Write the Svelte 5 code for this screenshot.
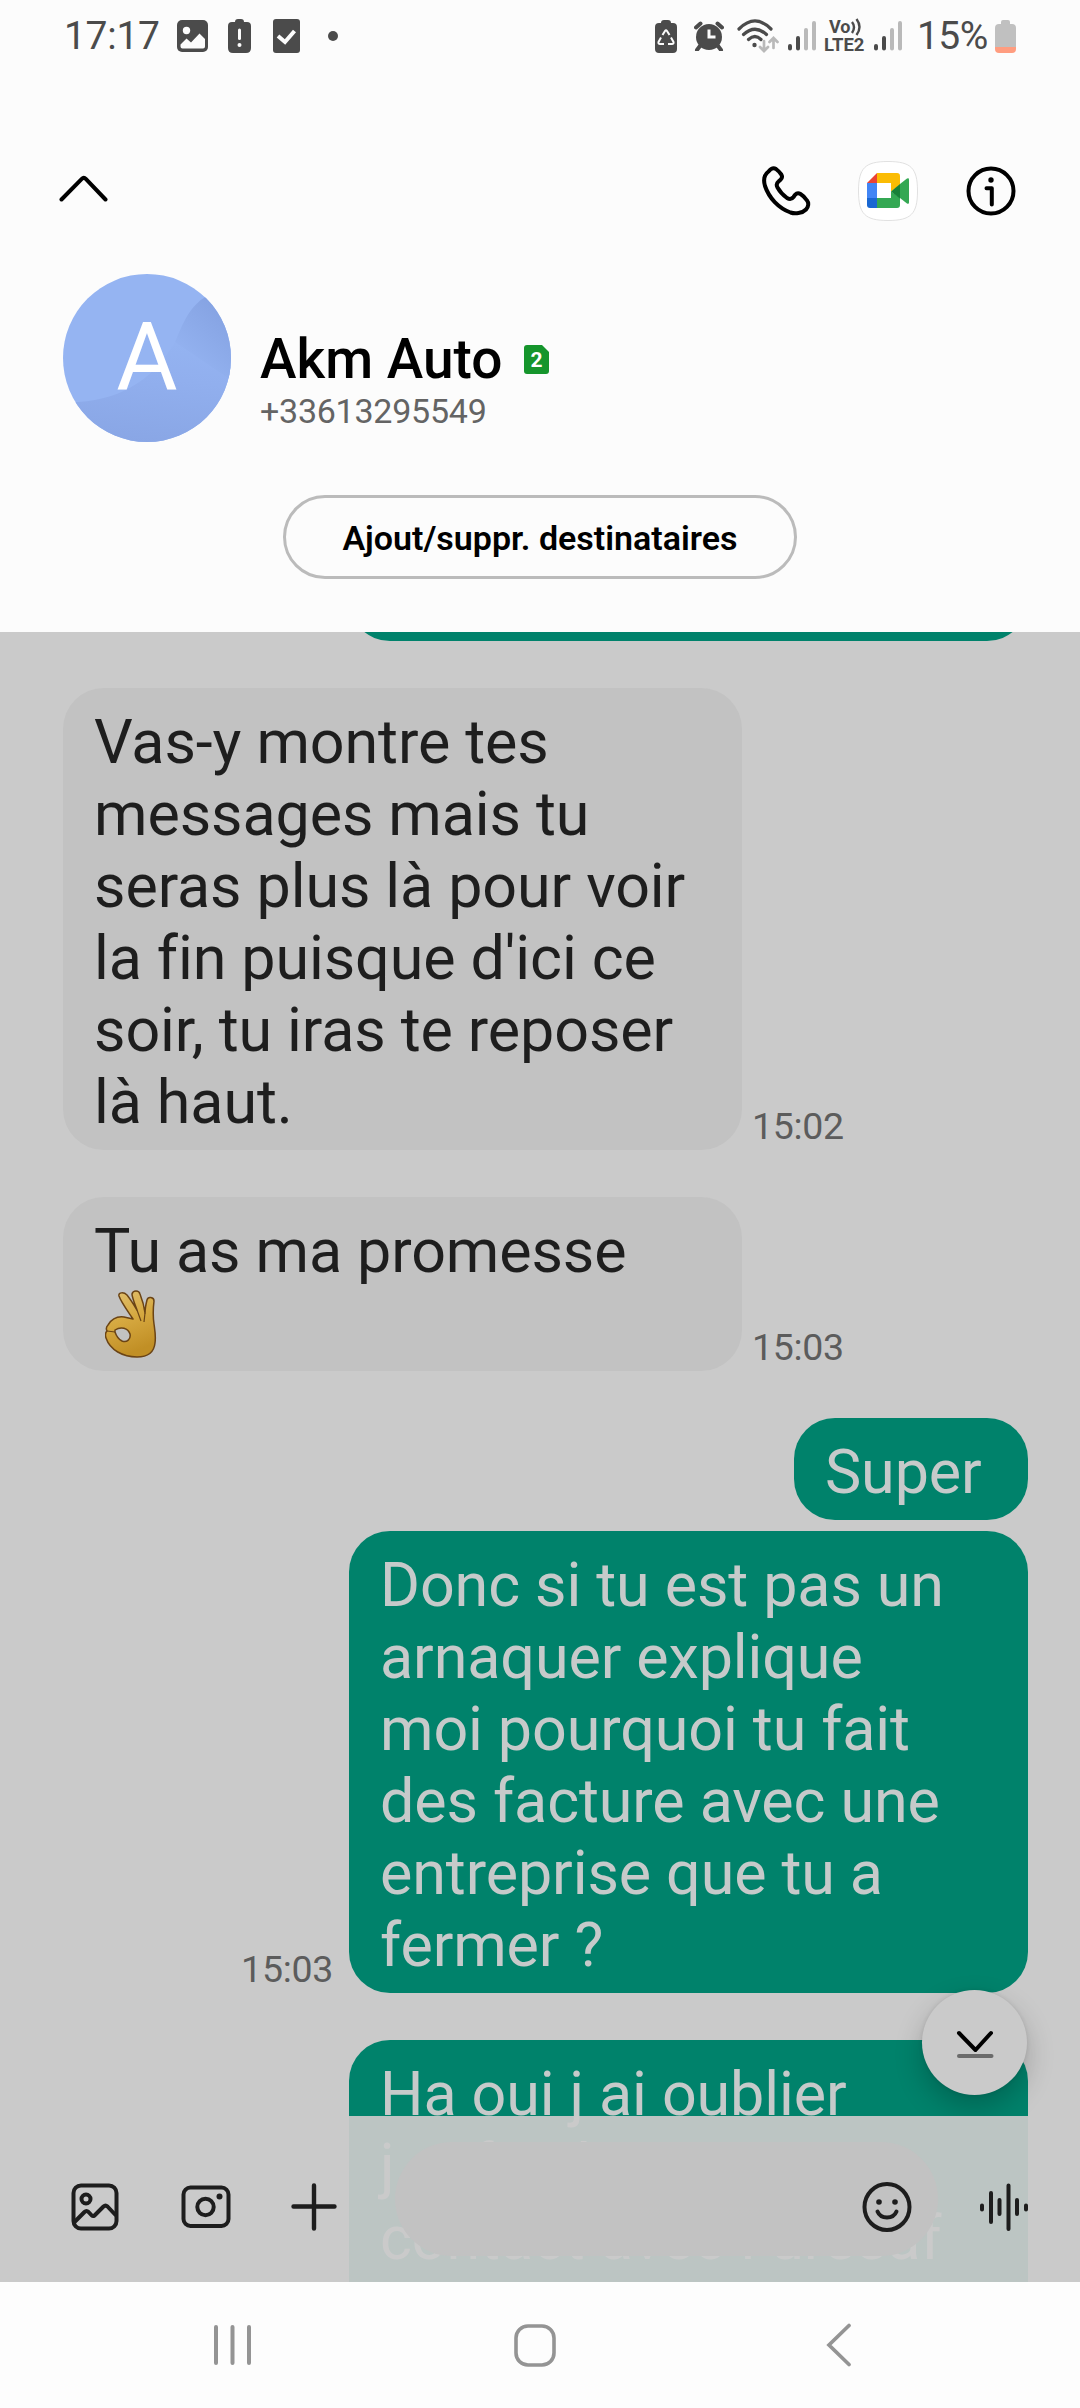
<script>
  const before = [
    {
      side: 'in',
      time: '15:02',
      lines: ['Vas-y montre tes', 'messages mais tu', 'seras plus là pour voir', "la fin puisque d'ici ce", 'soir, tu iras te reposer', 'là haut.']
    },
    { side: 'in', time: '15:03', lines: ['Tu as ma promesse'], emoji: true },
    { side: 'out', small: true, lines: ['Super'] },
    {
      side: 'out',
      time: '15:03',
      tight: true,
      lines: ['Donc si tu est pas un', 'arnaquer explique', 'moi pourquoi tu fait', 'des facture avec une', 'entreprise que tu a', 'fermer ?']
    },
    { side: 'out', last: true, lines: ['Ha oui j ai oublier', 'j ai fait le', 'contact avec l urssaf'] }
  ];
</script>

{#snippet signal()}
  <svg class="signal" width="28" height="30" viewBox="0 0 28 30" fill="none" stroke-width="4" stroke-linecap="round">
    <path d="M2 25v2.5M10 17v10.500" stroke="#4b4b4b" />
    <path d="M18 9v18.500M26 2v25.500" stroke="#b9b9b9" />
  </svg>
{/snippet}

<div class="phone">
  <header>
    <div class="status">
      <span class="clock">17:17</span>
      <svg class="s-image" width="31" height="32" viewBox="0 0 31 32">
        <rect width="31" height="32" rx="5" fill="#4b4b4b" />
        <circle cx="9.500" cy="10.500" r="3.700" fill="#fcfcfc" />
        <path d="M3.500 24.500 9.500 18.500 14 22.500 22.500 13.500 28 19v7.500q0 2-2 2H5.500q-2 0-2-2Z" fill="#fcfcfc" />
      </svg>
      <svg class="s-alert" width="23" height="34" viewBox="0 0 23 34">
        <path d="M7 3q0-3 3-3h3q3 0 3 3h3q4 0 4 4v22q0 5-5 5H5q-5 0-5-5V7q0-4 4-4Z" fill="#4b4b4b" />
        <path d="M11.500 11v8.500" stroke="#fcfcfc" stroke-width="3" stroke-linecap="round" />
        <circle cx="11.500" cy="26" r="2" fill="#fcfcfc" />
      </svg>
      <svg class="s-check" width="27" height="34" viewBox="0 0 27 34">
        <rect width="27" height="34" rx="3" fill="#4b4b4b" />
        <path d="M5 17l7 6L21.500 12" fill="none" stroke="#fcfcfc" stroke-width="4" />
      </svg>
      <span class="dot"></span>
      <span class="grow"></span>
      <svg class="s-eco" width="22" height="33" viewBox="0 0 22 33">
        <path d="M6 3q0-3 3-3h4q3 0 3 3h2q4 0 4 4v22q0 4-4 4H4q-4 0-4-4V7q0-4 4-4Z" fill="#4b4b4b" />
        <g fill="none" stroke="#fcfcfc" stroke-width="2" stroke-linejoin="round">
          <path d="M7.500 15 10 11q1-1.500 2 0l2.500 4" />
          <path d="M16 17.500l2.500 4.500q.5 2-1.500 2h-4" />
          <path d="M9 24H5q-2 0-1.500-2L6 17.500" />
        </g>
      </svg>
      <svg class="s-alarm" width="30" height="30" viewBox="0 0 30 30">
        <circle cx="15" cy="16" r="13" fill="#4b4b4b" />
        <path d="M2 6.500 6.500 2.500M28 6.500 23.500 2.500M6 25l-3 4M24 25l3 4" stroke="#4b4b4b" stroke-width="4" stroke-linecap="round" />
        <path d="M15 8.500v7.500h6.500" fill="none" stroke="#fcfcfc" stroke-width="3" />
      </svg>
      <svg class="s-wifi" width="43" height="34" viewBox="0 0 43 34" fill="none" stroke-linecap="round">
        <path d="M2 10Q18-6 34 10M6.500 15.500Q18 5 29.500 15.500M11.500 20.500Q18 14.500 24 20.500" stroke="#4b4b4b" stroke-width="3.200" />
        <circle cx="17.500" cy="26" r="2.200" fill="#4b4b4b" />
        <path d="M27 22v9.500M23 28l4 4 4-4M36.500 29v-9.500M32.500 23l4-4 4 4" stroke="#b9b9b9" stroke-width="2.700" />
      </svg>
      {@render signal()}
      <span class="volte"><span class="vo">Vo<svg width="11" height="18" viewBox="0 0 11 18" fill="none" stroke="#4b4b4b" stroke-width="2.400"><path d="M1 4q4 5 0 11M5.500 1q6 8 0 16" /></svg></span><span>LTE2</span></span>
      {@render signal()}
      <span class="percent">15%</span>
      <svg class="s-battery" width="21" height="33" viewBox="0 0 21 33">
        <path d="M6 4V2q0-2 2-2h5q2 0 2 2v2h2q4 0 4 4v19H0V8q0-4 4-4Z" fill="#c0c0c0" />
        <path d="M0 27h21v2q0 4-4 4H4q-4 0-4-4Z" fill="#ff9d80" />
      </svg>
    </div>

    <div class="toolbar">
      <svg class="t-up" width="50" height="28" viewBox="0 0 50 28" fill="none" stroke="#000" stroke-width="4" stroke-linecap="round" stroke-linejoin="round">
        <path d="M2.500 24.500 22.800 3.800q2-2 4 0L46.500 24.500" />
      </svg>
      <span class="grow"></span>
      <svg class="t-phone" width="50" height="50" viewBox="0 0 50 50" fill="none" stroke="#000" stroke-width="4" stroke-linejoin="round">
        <path d="M7.500 5.500C3 9 2.500 15 4 20c4 12 13.500 22 25.500 26.500 4.500 1.500 11.500 1 15.500-3 2.500-2.500 3-6.500 1-9-2-3-4-5-6.500-6.500-2-1.200-4-.8-5.500.8l-1.500 2.200c-1.500 2-4 2.500-6.500 1-4-3-7-6-9.500-10.500-1.200-2.200-.8-4.500 1-6l2-1.800c1.700-1.500 2-3.200.8-5.200-1.500-2.200-3.300-4-5.300-5.500-2.500-1.500-5-.5-7.500 2.500Z" />
      </svg>
      <svg class="t-meet" width="60" height="60" viewBox="0 0 60 60">
        <path d="M30 .5C53 .5 59.500 7 59.500 30S53 59.500 30 59.500.5 53 .5 30 7 .5 30 .5Z" fill="#fff" stroke="#e1e1e1" />
        <path d="M19 12v10H9Z" fill="#ea4335" />
        <path d="M19 12h20q3 0 3 3v9l-9 6.500V22H19Z" fill="#fbbc04" />
        <path d="M9 22h10v15H9Z" fill="#4285f4" />
        <path d="M9 37h10v10h-7q-3 0-3-3Z" fill="#1967d2" />
        <path d="M19 37h14v-6.500l9 6v7.500q0 3-3 3H19Z" fill="#34a853" />
        <path d="M42 23l7-5.500q2-1 2 1v23q0 2-2 1l-7-5.500Z" fill="#34a853" />
        <path d="M33 30.500 42 23v14.500Z" fill="#188038" />
      </svg>
      <svg class="t-info" width="50" height="50" viewBox="0 0 50 50" fill="none" stroke="#000" stroke-width="4" stroke-linecap="round">
        <circle cx="25" cy="25" r="22.500" />
        <path d="M20.500 22.200h5.300v16.300" stroke-linejoin="round" />
        <circle cx="25" cy="14" r="2.700" fill="#000" stroke="none" />
      </svg>
    </div>

    <div class="contact">
      <svg class="avatar" width="168" height="168" viewBox="0 0 168 168">
        <defs>
          <linearGradient id="low" x1="0.600" y1="0" x2="0.400" y2="1">
            <stop offset="0" stop-color="#94b3f1" />
            <stop offset="0.350" stop-color="#91afee" />
            <stop offset="1" stop-color="#89a6e5" />
          </linearGradient>
          <linearGradient id="side" x1="0.900" y1="0" x2="0.300" y2="1">
            <stop offset="0" stop-color="#829fdf" />
            <stop offset="0.900" stop-color="#94b3f1" />
          </linearGradient>
          <clipPath id="round"><circle cx="84" cy="84" r="84" /></clipPath>
        </defs>
        <g clip-path="url(#round)">
          <rect width="168" height="168" fill="#95b4f2" />
          <path d="M0 128C50 130 88 110 112 68l56 25v75H0Z" fill="url(#low)" />
          <path d="M112 68C120 50 126 32 144 22l24-4v88Z" fill="url(#side)" />
        </g>
        <text x="84" y="116" text-anchor="middle">A</text>
      </svg>
      <div class="who">
        <div class="name">
          <span>Akm Auto</span>
          <svg width="25" height="29" viewBox="0 0 25 29">
            <path d="M3 0h15l7 7v19q0 3-3 3H3q-3 0-3-3V3q0-3 3-3Z" fill="#15952c" />
            <text x="12.500" y="22" text-anchor="middle">2</text>
          </svg>
        </div>
        <div class="number">+33613295549</div>
      </div>
    </div>
    <button class="recipients">Ajout/suppr. destinataires</button>
  </header>

  <main>
    <div class="thread">
      <div class="row out"><div class="bubble peek"></div></div>
      {#each before as m}
        <div class="row {m.side}" class:tight={m.tight}>
          <div class="bubble" class:small={m.small} class:last={m.last}>
            {#each m.lines as line}<p>{line}</p>{/each}
            {#if m.emoji}
              <p class="emoji">
                <svg width="52" height="68" viewBox="0 0 52 68" stroke="#6b4415" stroke-width="1.500" stroke-linejoin="round" role="img" aria-label="OK">
                  <defs>
                    <linearGradient id="skin" x1="0" y1="0" x2="0.300" y2="1">
                      <stop offset="0" stop-color="#e2c274" />
                      <stop offset="0.500" stop-color="#d6a941" />
                      <stop offset="1" stop-color="#c18f25" />
                    </linearGradient>
                  </defs>
                  <path fill="url(#skin)" fill-rule="evenodd" d="M28 29C22 20 16 12 14 6c-1-4 5-4 8-1 4 5 7 10 10 15C29 12 27 7 27 4c1-4 7-4 8 0 2 5 4 11 5 19 0-5 1-9 2-13 1-4 7-3 7 1-1 8-1 16 0 23 1 7 2 12 1 19C49 63 42 67 32 67 18 67 5 60 1 48c-1-3-1-5 1-7-1-2-1-4 1-6 3-5 8-9 16-8ZM10 40c6-4 13-2 15 4 1 5-3 9-8 7-4-2-6-6-7-9Z" />
                  <path d="M2 41l8 1M32 20l4 11M40 23l-1 9" fill="none" stroke-width="1.200" />
                </svg>
              </p>
            {/if}
          </div>
          {#if m.time}<time>{m.time}</time>{/if}
        </div>
      {/each}
    </div>

    <div class="jump">
      <svg width="40" height="32" viewBox="0 0 40 32" fill="none" stroke-linecap="round" stroke-linejoin="round" stroke-width="4">
        <path d="M4 4l16.500 17L36 4" stroke="#000" />
        <path d="M4 27h32.500" stroke="#6b6b6b" />
      </svg>
    </div>

    <div class="compose">
      <svg class="c-image" width="48" height="48" viewBox="0 0 48 48" fill="none" stroke="#1d1d1d" stroke-width="4" stroke-linejoin="round">
        <rect x="2.500" y="2.500" width="43" height="43" rx="7.500" />
        <circle cx="15" cy="16" r="4.500" />
        <path d="M3 39.500 13.500 29q2-2 4 0l3.300 3.500q1.200 1 2.700 0L32.500 23.500q2-1.800 4 0l8.500 9" />
      </svg>
      <svg class="c-camera" width="50" height="44" viewBox="0 0 50 44" fill="none" stroke="#1d1d1d" stroke-width="4">
        <rect x="2.500" y="2.500" width="45" height="38.500" rx="7" />
        <circle cx="24.500" cy="22" r="8.200" />
        <circle cx="38.500" cy="11.500" r="3" fill="#1d1d1d" stroke="none" />
      </svg>
      <svg class="c-plus" width="46" height="48" viewBox="0 0 46 48" stroke="#1d1d1d" stroke-width="4.400" stroke-linecap="round">
        <path d="M2.500 23.500h41M23 2.500v43" />
      </svg>
      <div class="field">
        <svg width="50" height="52" viewBox="0 0 50 52" fill="none" stroke="#1d1d1d" stroke-width="4" stroke-linecap="round">
          <ellipse cx="25" cy="26" rx="22.500" ry="23" />
          <path d="M15.500 30.500q2.500 6 9.500 6t9.500-6" />
          <circle cx="17" cy="21" r="2.800" fill="#1d1d1d" stroke="none" />
          <circle cx="33" cy="21" r="2.800" fill="#1d1d1d" stroke="none" />
        </svg>
      </div>
      <svg class="c-voice" width="50" height="50" viewBox="0 0 50 50" stroke="#1d1d1d" stroke-width="4" stroke-linecap="round">
        <path d="M3 23.500v4M12 11v29M20.500 18v14M29.500 3.500v43.500M38 18v14M47 23.500v4" />
      </svg>
    </div>
  </main>

  <nav>
    <svg class="n-recent" width="40" height="42" viewBox="0 0 40 42" stroke="#949494" stroke-width="4" stroke-linecap="round">
      <path d="M3 3v36M19.500 3v36M36 3v36" />
    </svg>
    <svg class="n-home" width="42" height="43" viewBox="0 0 42 43" fill="none" stroke="#949494" stroke-width="3.600">
      <rect x="2" y="2" width="38" height="39" rx="12" />
    </svg>
    <svg class="n-back" width="26" height="44" viewBox="0 0 26 44" fill="none" stroke="#949494" stroke-width="3.700" stroke-linecap="round">
      <path d="M23 2.500 3 22l20 19.500" />
    </svg>
  </nav>
</div>

<style>
  :global(body) {
    margin: 0;
    background: #fcfcfc;
  }
  .phone {
    width: 1080px;
    height: 2408px;
    display: flex;
    flex-direction: column;
    overflow: hidden;
    background: #fcfcfc;
    font-family: Roboto, 'Liberation Sans', sans-serif;
    color: #000;
  }
  svg {
    display: block;
    flex: none;
  }
  .grow {
    flex: 1;
  }
  header {
    height: 632px;
    flex: none;
    display: flex;
    flex-direction: column;
  }
  .status {
    height: 72px;
    box-sizing: border-box;
    padding: 0 64px 0 64px;
    display: flex;
    align-items: center;
    color: #4b4b4b;
    font-size: 39px;
    white-space: nowrap;
  }
  .clock {
    width: 113px;
    line-height: 46px;
    letter-spacing: -0.300px;
  }
  .s-alert {
    margin-left: 20px;
  }
  .s-check {
    margin-left: 22px;
  }
  .dot {
    width: 10px;
    height: 10px;
    margin-left: 28px;
    border-radius: 50%;
    background: #4b4b4b;
  }
  .s-alarm {
    margin-left: 17px;
  }
  .s-wifi {
    margin-left: 13px;
  }
  .signal {
    margin-left: 8px;
  }
  .volte {
    width: 43px;
    margin-left: 8px;
    display: flex;
    flex-direction: column;
    font-size: 18.500px;
    line-height: 18px;
    font-weight: 700;
  }
  .vo {
    display: flex;
    padding-left: 5px;
    font-size: 18px;
  }
  .volte + .signal {
    margin-left: 7px;
  }
  .percent {
    width: 78px;
    padding-left: 15px;
    line-height: 46px;
    letter-spacing: -0.600px;
  }
  .toolbar {
    height: 202px;
    box-sizing: border-box;
    padding: 36px 64px 0 59px;
    display: flex;
    align-items: center;
  }
  .t-up {
    margin-bottom: 5px;
  }
  .t-meet {
    margin-left: 47px;
  }
  .t-info {
    margin-left: 48px;
  }
  .contact {
    height: 221px;
    padding-left: 63px;
    display: flex;
    align-items: flex-start;
  }
  .avatar text {
    font-size: 94px;
    font-weight: 400;
    fill: #fff;
  }
  .who {
    padding: 53px 0 0 29px;
  }
  .name {
    display: flex;
    align-items: center;
    gap: 22px;
    font-size: 55px;
    line-height: 64px;
    font-weight: 500;
  }
  .name text {
    font-size: 21px;
    font-weight: 700;
    fill: #fff;
  }
  .number {
    font-size: 34px;
    line-height: 40px;
    letter-spacing: -0.250px;
    color: #646464;
  }
  .recipients {
    width: 514px;
    height: 84px;
    align-self: center;
    box-sizing: border-box;
    padding: 1px 0 0;
    border: 3px solid #bbb;
    border-radius: 42px;
    background: none;
    font: 600 34px/44px Roboto, sans-serif;
    color: #000;
    white-space: nowrap;
  }
  main {
    position: relative;
    height: 1650px;
    flex: none;
    overflow: hidden;
    background: #cacaca;
  }
  .thread {
    padding: 0 52px 0 63px;
    display: flex;
    flex-direction: column;
  }
  .row {
    display: flex;
    align-items: flex-end;
    margin-top: 47px;
  }
  .row:first-child {
    margin-top: -91px;
  }
  .row.out {
    flex-direction: row-reverse;
  }
  .row.tight {
    margin-top: 11px;
  }
  .bubble {
    width: 679px;
    box-sizing: border-box;
    padding: 18px 31px 12px;
    border-radius: 41px;
    background: #c2c2c2;
    color: #1e1e1e;
    font-size: 61px;
    letter-spacing: -0.100px;
    line-height: 72px;
    white-space: nowrap;
  }
  .out .bubble {
    background: #00826b;
    color: #c6caca;
  }
  .bubble.small {
    width: 234px;
  }
  .bubble.peek {
    height: 100px;
  }
  .bubble.last {
    height: 320px;
  }
  p {
    margin: 0;
  }
  .emoji {
    height: 69px;
    padding: 3px 0 0 11px;
  }
  time {
    margin: 0 10px;
    padding-bottom: 2px;
    font-size: 37.500px;
    letter-spacing: -0.300px;
    line-height: 44px;
    color: #5c5c5c;
  }
  .out time {
    margin-right: 16px;
  }
  .jump {
    position: absolute;
    left: 922px;
    top: 1358px;
    width: 105px;
    height: 105px;
    box-sizing: border-box;
    padding-top: 5px;
    display: flex;
    align-items: center;
    justify-content: center;
    border-radius: 50%;
    background: #cacaca;
    box-shadow: 0 12px 28px rgba(0, 0, 0, 0.220), 0 0 4px rgba(0, 0, 0, 0.100);
  }
  .compose {
    position: absolute;
    inset: auto 0 0 0;
    height: 166px;
    box-sizing: border-box;
    padding: 16px 51px 0 71px;
    display: flex;
    align-items: center;
    background: rgba(202, 202, 202, 0.930);
  }
  .c-camera {
    margin-left: 62px;
  }
  .c-plus {
    margin-left: 60px;
  }
  .field {
    width: 544px;
    height: 114px;
    margin: 0 41px 16px 58px;
    box-sizing: border-box;
    padding: 15px 26px 0 0;
    display: flex;
    align-items: center;
    justify-content: flex-end;
    border-radius: 57px;
    background: #c2c2c2;
  }
  nav {
    flex: 1;
    display: flex;
    align-items: center;
    padding-left: 213px;
    background: #fdfdfd;
  }
  .n-home {
    margin-left: 261px;
  }
  .n-back {
    margin-left: 270px;
  }
</style>
